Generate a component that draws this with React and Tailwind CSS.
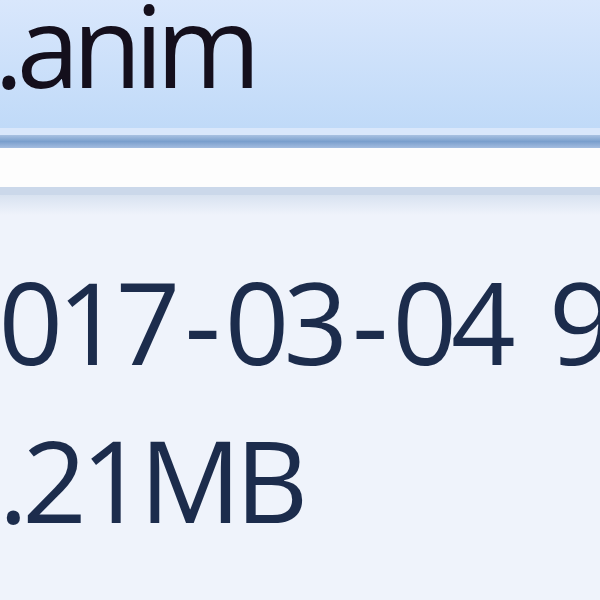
export default function App() {
  return (
    <div className="w-[600px] h-[600px] overflow-hidden bg-[#eff3fb] font-['Open_Sans',sans-serif]">
      <div className="h-[128px] bg-gradient-to-b from-[#d9e7fc] to-[#c0daf8] overflow-hidden">
        <div className="text-[113px] leading-[88px] tracking-[-7px] font-medium text-[#140f1c] whitespace-nowrap -ml-[6px]">
          .anim
        </div>
      </div>
      <div className="h-[7px] bg-[#d9e7fb]" />
      <div className="h-[13px] bg-gradient-to-b from-[#a9c2e2] via-[#7a9fcd] to-[#a4bde0]" />
      <div className="h-[39px] bg-[#fdfdfd]" />
      <div className="h-[8px] bg-[#cbd8ea]" />
      <div className="h-[20px] bg-gradient-to-b from-[#d8e2f0] to-[#eff3fb]" />
      <div className="pt-[27px] text-[113px] leading-[158px] tracking-[-6px] font-medium text-[#1c2c4c] whitespace-nowrap">
        <div className="-ml-[60px]">
          2017<span className="mx-[10px]">-</span>03<span className="mx-[10px]">-</span>04 <span className="ml-[16px]">9:50</span>
        </div>
        <div className="-ml-[60px]">1.21MB</div>
      </div>
    </div>
  );
}
